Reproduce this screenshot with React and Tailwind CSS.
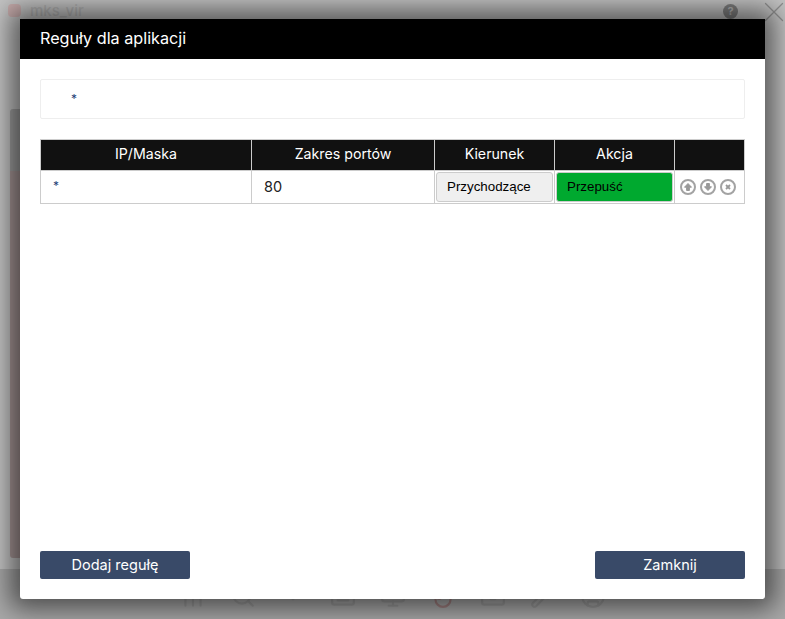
import { X, BarChart2, Search, ChevronDown, Keyboard, Monitor, Flame, Inbox, Wrench, CircleUser } from 'lucide-react'

const FONT = 'font-["Inter",sans-serif]'
const DOCK = [BarChart2, Search, ChevronDown, Keyboard, Monitor, Flame, Inbox, Wrench, CircleUser]

function RoundIcon({ children }) {
  return (
    <span className="flex h-4 w-4 items-center justify-center rounded-full border-2 border-[#a3a3a3]">
      <svg viewBox="0 0 10 10" className="h-[10px] w-[10px] fill-[#999] stroke-[#999]">
        {children}
      </svg>
    </span>
  )
}

function Th({ className = '', children }) {
  return (
    <div className={`flex h-[30px] items-center justify-center bg-[#111] pb-[2px] text-[14.2px] text-white ${className}`}>
      {children}
    </div>
  )
}

export default function App() {
  return (
    <div className={`relative flex h-[619px] w-[785px] flex-col overflow-hidden bg-[#c4c4c4] ${FONT}`}>
      {/* app behind the overlay */}
      <div className="flex h-[26px] items-start justify-between pl-[8px] pt-[3px]">
        <div className="flex items-center gap-[9px] text-[15px] font-medium leading-none text-[#b2b2b2]">
          <span className="h-[13px] w-[13px] rounded-sm bg-[#c8adad]" />
          mks_vir
        </div>
        <div className="flex items-start gap-[19px]">
          <span className="mt-[1px] flex h-[15px] w-[15px] items-center justify-center rounded-full bg-[#808080] text-[11px] font-bold leading-none text-[#b5b5b5]">?</span>
          <X size={34} strokeWidth={0.9} className="-mr-[6px] -mt-[8px] text-[#909090]" />
        </div>
      </div>
      <div className="flex flex-1 flex-col pb-[11px] pl-[10px] pt-[83px]">
        <div className="h-[62px] w-[30px] rounded-t-[3px] bg-[#a0a0a0]" />
        <div className="w-[30px] flex-1 rounded-b-[3px] bg-[#a89898]" />
      </div>
      <div className="flex h-[50px] items-center bg-[#a9a9a9] pb-[2px] pl-[168px] pt-[6px]">
        {DOCK.map((Icon, i) => (
          <div key={i} className="flex w-[50px] justify-center">
            <Icon size={26} strokeWidth={2} className={i === 5 ? 'text-[#a08080]' : 'text-[#9a9a9a]'} />
          </div>
        ))}
      </div>

      {/* modal */}
      <div className="absolute left-[20px] top-[19px] flex h-[580px] w-[745px] flex-col rounded-b-[3px] bg-white shadow-[0_0_26px_10px_rgba(0,0,0,0.55)]">
        <div className="flex h-[40px] items-center bg-black pb-[2px] pl-[20px] text-[16.2px] text-white">Reguły dla aplikacji</div>

        <div className="flex flex-1 flex-col p-[20px]">
          <div className="flex h-[40px] items-center rounded-[2px] border border-[#eee] pl-[30px] text-[12px] text-[#1f3f77]">*</div>

          <div className="mt-[20px] border border-[#ccc]">
            <div className="grid grid-cols-[210px_182px_119px_119px_1fr] gap-x-px border-b border-[#ccc] bg-[#ccc]">
              <Th>IP/Maska</Th>
              <Th>Zakres portów</Th>
              <Th>Kierunek</Th>
              <Th>Akcja</Th>
              <Th />
            </div>
            <div className="grid h-[32px] grid-cols-[210px_182px_119px_119px_1fr] gap-x-px bg-[#ccc]">
              <div className="flex items-center bg-white pb-[3px] pl-[12px] text-[12px] text-[#1f3f77]">*</div>
              <div className="flex items-center bg-white pl-[12px] text-[14.5px] text-[#222]">80</div>
              <div className="bg-white p-px">
                <div className="flex h-[30px] items-center rounded-[3px] border border-[#ccc] bg-[#efefef] pl-[10px] font-['Liberation_Sans',sans-serif] text-[13.33px] text-black">Przychodzące</div>
              </div>
              <div className="bg-white p-px">
                <div className="flex h-[30px] items-center rounded-[3px] border border-[#ccc] bg-[#00a92f] pl-[10px] font-['Liberation_Sans',sans-serif] text-[13.33px] text-black">Przepuść</div>
              </div>
              <div className="flex items-center gap-[4px] bg-white pb-[1px] pl-[5px]">
                <RoundIcon><path d="M5 1.5 8.5 5.2H6.4V8.5H3.6V5.2H1.5Z" /></RoundIcon>
                <RoundIcon><path d="M5 8.5 8.5 4.8H6.4V1.5H3.6V4.8H1.5Z" /></RoundIcon>
                <RoundIcon><path d="M3 3 7 7M7 3 3 7" fill="none" strokeWidth="1.8" /></RoundIcon>
              </div>
            </div>
          </div>

          <div className="mt-auto flex justify-between">
            <button className="h-[28px] w-[150px] rounded-[2px] bg-[#394a68] pb-[1px] text-[14.5px] text-white">Dodaj regułę</button>
            <button className="h-[28px] w-[150px] rounded-[2px] bg-[#394a68] pb-[1px] text-[14.5px] text-white">Zamknij</button>
          </div>
        </div>
      </div>
    </div>
  )
}
